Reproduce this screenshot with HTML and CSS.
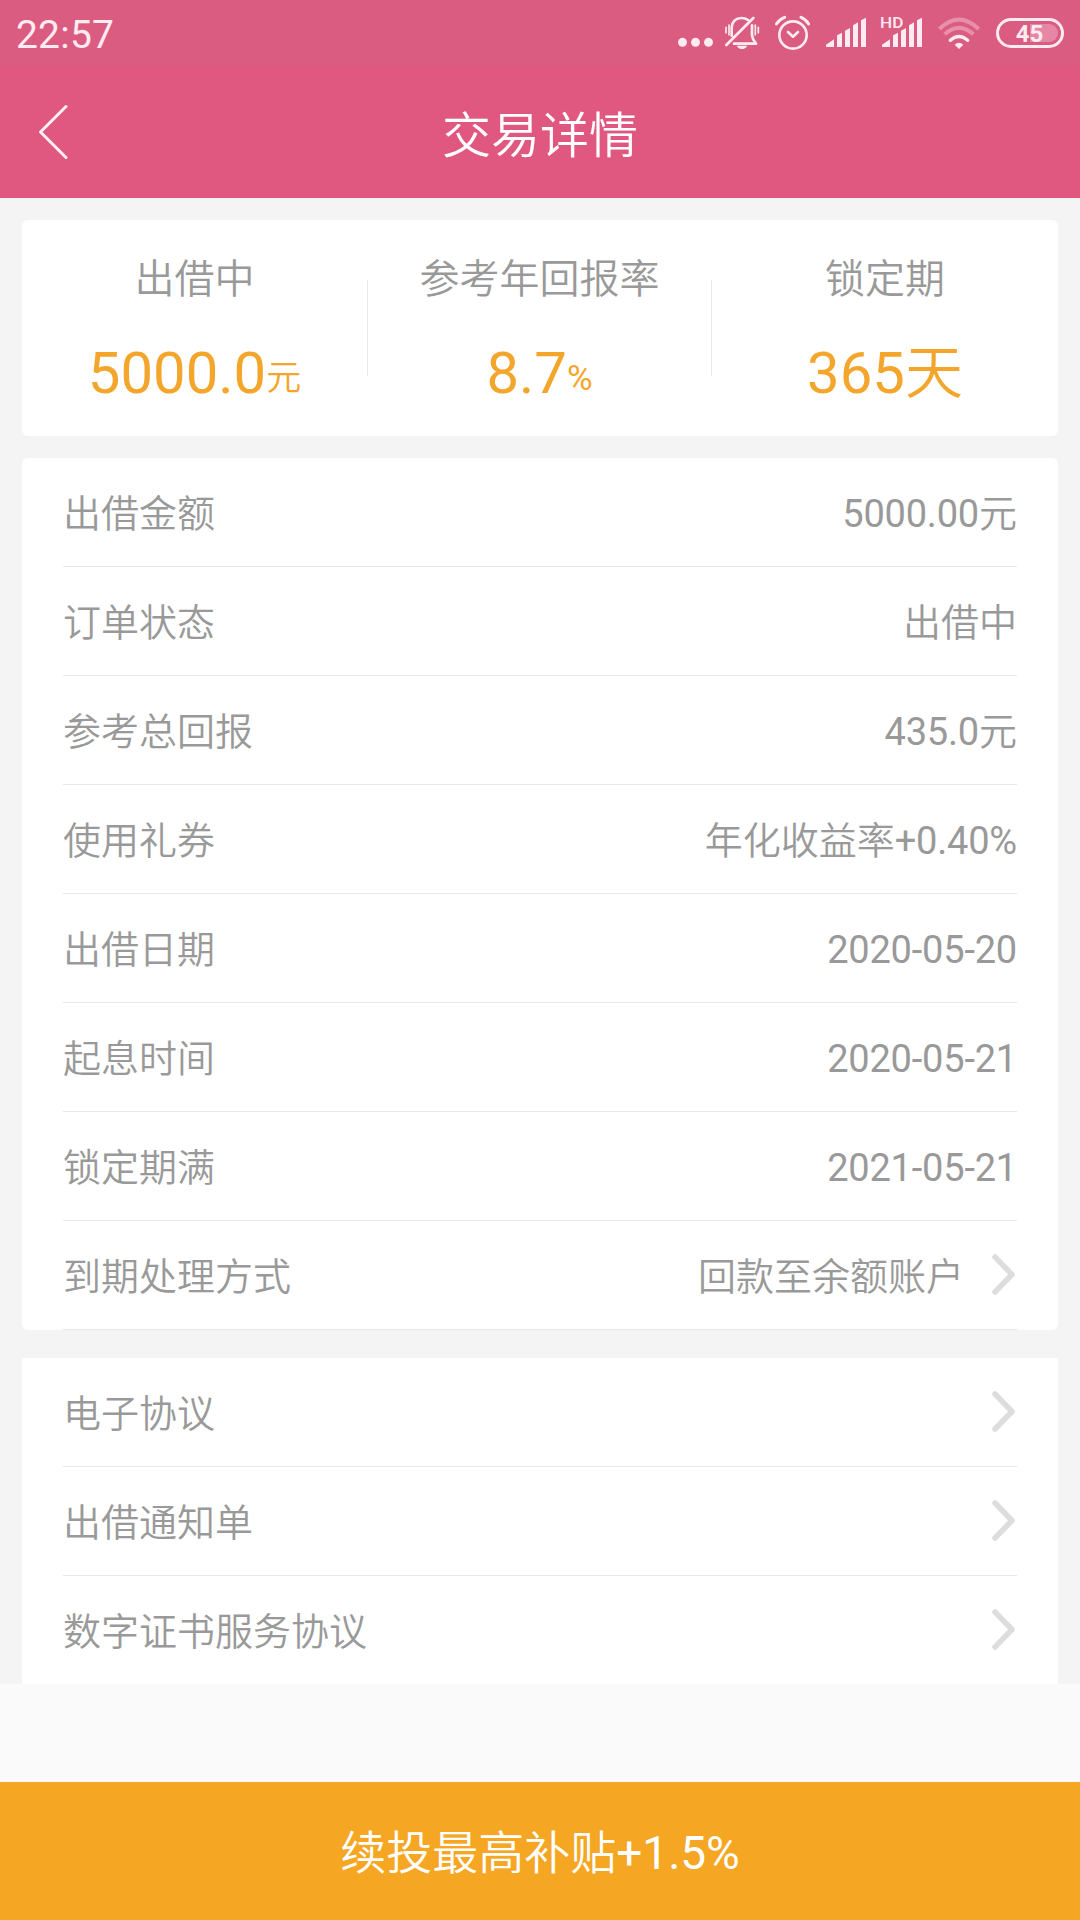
FILE: index.html
```html
<!DOCTYPE html>
<html lang="zh-CN">
<head>
    <meta charset="UTF-8">
    <meta name="viewport" content="width=device-width, initial-scale=1.0">
    <title>交易详情</title>
    <link rel="stylesheet" href="styles.css">
</head>
<body>
    <div class="status-bar">
        <span class="time">22:57</span>
        <div class="status-icons">
            <svg class="dots" width="35" height="35" viewBox="54 45 105 105">
                <circle cx="67.500" cy="127" r="13.500"/>
                <circle cx="106.500" cy="127" r="13.500"/>
                <circle cx="145.500" cy="127" r="13.500"/>
            </svg>
            <svg class="bell line" width="35" height="35" viewBox="195 45 105 105">
                <path d="M199 135L280 54M215 107V82Q218 54 245 54Q256 54 264 60M276 76V105Q277 117 288 131H222" stroke-width="8"/>
                <path d="M207 75V104M198 82V98M286 75V104M295 82V98" stroke-width="5"/>
                <path class="solid" d="M230 137H262Q256 147 246 147Q236 147 230 137Z"/>
            </svg>
            <svg class="alarm line" width="35" height="35" viewBox="345 45 105 105">
                <circle cx="399" cy="105" r="41" stroke-width="8"/>
                <path d="M384 96L399 110L414 96" stroke-width="8"/>
                <path d="M349 72Q358 58 374 52M446 72Q438 58 423 52" stroke-width="9"/>
            </svg>
            <svg class="signal" width="40" height="35" viewBox="498 45 120 105">
                <path d="M498 141V134L522 118V141ZM531 141V106L546 98V141ZM555 141V92L570 84V141ZM579 141V76L594 67V141ZM603 141V61L618 53V141Z"/>
            </svg>
            <svg class="signal-hd" width="43" height="35" viewBox="660 45 129 105">
                <path d="M666 141V134L690 118V141ZM699 141V106L714 98V141ZM723 141V92L738 84V141ZM747 141V76L762 67V141ZM771 141V61L786 53V141Z"/>
                <text x="660" y="84" textLength="70" lengthAdjust="spacingAndGlyphs">HD</text>
            </svg>
            <svg class="wifi line" width="42" height="35" viewBox="834 45 126 105">
                <path class="weak" d="M838 87Q897 31 956 87M854 103Q897 64 940 103"/>
                <path d="M871 121Q897 98 923 121" stroke-width="10"/>
                <path class="solid" d="M884 134Q897 122 910 134L897 147Z"/>
            </svg>
            <div class="battery"><span class="level">45</span></div>
        </div>
    </div>

    <div class="header">
        <svg class="back" width="30" height="56" viewBox="0 0 30 56">
            <path d="M28 2.500L2.500 28L28 53.500"/>
        </svg>
        <h1>交易详情</h1>
    </div>

    <div class="content">
        <div class="summary">
            <div class="item">
                <div class="label">出借中</div>
                <div class="number">5000.0<small class="cn">元</small></div>
            </div>
            <div class="item">
                <div class="label">参考年回报率</div>
                <div class="number">8.7<small>%</small></div>
            </div>
            <div class="item">
                <div class="label">锁定期</div>
                <div class="number">365<span class="cn">天</span></div>
            </div>
        </div>

        <div class="card details">
            <div class="row"><span>出借金额</span><span class="amount">5000.00<span class="cn">元</span></span></div>
            <div class="row"><span>订单状态</span><span>出借中</span></div>
            <div class="row"><span>参考总回报</span><span class="amount">435.0<span class="cn">元</span></span></div>
            <div class="row"><span>使用礼券</span><span class="amount"><span class="cn">年化收益率</span>+0.40%</span></div>
            <div class="row"><span>出借日期</span><span class="amount">2020-05-20</span></div>
            <div class="row"><span>起息时间</span><span class="amount">2020-05-21</span></div>
            <div class="row"><span>锁定期满</span><span class="amount">2021-05-21</span></div>
            <div class="row">
                <span>到期处理方式</span>
                <span class="value">回款至余额账户</span>
                <svg class="arrow" width="25" height="42" viewBox="0 0 25 42"><path d="M3 3L20 20.500L3 38"/></svg>
            </div>
        </div>

        <div class="card links">
            <div class="row">
                <span>电子协议</span>
                <svg class="arrow" width="25" height="42" viewBox="0 0 25 42"><path d="M3 3L20 20.500L3 38"/></svg>
            </div>
            <div class="row">
                <span>出借通知单</span>
                <svg class="arrow" width="25" height="42" viewBox="0 0 25 42"><path d="M3 3L20 20.500L3 38"/></svg>
            </div>
            <div class="row">
                <span>数字证书服务协议</span>
                <svg class="arrow" width="25" height="42" viewBox="0 0 25 42"><path d="M3 3L20 20.500L3 38"/></svg>
            </div>
        </div>
    </div>

    <button class="submit"><span class="cn">续投最高补贴</span>+1.5%</button>
</body>
</html>
```

FILE: styles.css
```css
* {
    box-sizing: border-box;
}
body {
    font-family: Roboto, "Noto Sans CJK SC", sans-serif;
    color: #999;
    margin: 0;
    min-height: 1920px;
    display: flex;
    flex-direction: column;
    background: #fafafa;
}
.status-bar {
    height: 66px;
    display: flex;
    justify-content: space-between;
    padding: 0 16px;
    background: #da5c80;
    color: #ffebf1;
}
.time {
    font-size: 39px;
    line-height: 71px;
    letter-spacing: 0.2px;
}
.status-icons {
    display: flex;
    align-items: flex-start;
    padding-top: 15px;
}
.status-icons svg {
    fill: #ffebf1;
}
.status-icons .line {
    fill: none;
    stroke: #ffebf1;
    stroke-linecap: round;
    stroke-linejoin: round;
}
.status-icons .solid {
    fill: #ffebf1;
    stroke: none;
}
.bell {
    margin-left: 12px;
}
.alarm, .signal-hd + .wifi {
    margin-left: 15px;
}
.signal {
    margin-left: 16px;
}
.signal-hd {
    margin-left: 14px;
}
.signal-hd text {
    font-size: 45px;
    font-weight: 500;
}
.wifi .weak {
    stroke: #e88fab;
    stroke-width: 12;
    stroke-linecap: butt;
}
.battery {
    width: 68px;
    height: 30px;
    margin: 3px 0 0 16px;
    padding: 3px;
    border: 3px solid #ffebf1;
    border-radius: 15px;
}
.level {
    display: block;
    height: 18px;
    padding-right: 1px;
    border-radius: 9px;
    background: linear-gradient(to right, #da5c80 50%, #e587a5 50%);
    font-size: 24px;
    font-weight: bold;
    line-height: 20px;
    text-align: center;
}
.header {
    height: 132px;
    display: grid;
    grid-template-columns: 120px 1fr 120px;
    align-items: center;
    background: #e05880;
    color: white;
}
.back {
    margin-left: 38px;
    fill: none;
    stroke: #fff0f5;
    stroke-width: 3;
    stroke-linecap: round;
    stroke-linejoin: round;
}
/* chinese text is drawn a bit lighter than the digits */
h1, .label, .row, .cn {
    font-weight: 350;
}
h1 {
    margin: 0;
    padding-top: 10px;
    font-size: 49px;
    line-height: 122px;
    text-align: center;
}
.content {
    padding: 22px 22px 0;
    background: #f4f4f4;
}
.summary {
    height: 216px;
    display: grid;
    grid-template-columns: 345px 344px 347px;
    align-items: center;
    margin-bottom: 22px;
    border-radius: 6px;
    background: white;
    text-align: center;
}
.item {
    height: 96px;
    display: flex;
    flex-direction: column;
    justify-content: center;
}
.item + .item {
    border-left: 1px solid #e8e8e8;
}
.label {
    padding-top: 6px;
    font-size: 40px;
    line-height: 60px;
}
.number {
    height: 80px;
    margin-top: 24px;
    font-size: 58px;
    line-height: 78px;
    color: #f3a62b;
}
.number small {
    font-size: 35px;
    line-height: 1;
    vertical-align: 3px;
}
.card {
    padding: 0 41px;
    background: white;
}
.details {
    margin-bottom: 28px;
    border-radius: 6px;
}
.row {
    height: 109px;
    display: flex;
    align-items: center;
    justify-content: space-between;
    border-bottom: 1px solid #e8e8e8;
    font-size: 38px;
    line-height: 108px;
}
.row > span {
    padding-top: 4px;
}
.links .row:last-child {
    height: 108px;
    border-bottom: none;
}
.amount {
    font-weight: 400;
    letter-spacing: -0.2px;
}
.amount .cn {
    letter-spacing: 0;
}
.value {
    margin-left: auto;
}
.arrow {
    margin-left: 28px;
    fill: none;
    stroke: #ddd;
    stroke-width: 5.500;
    stroke-linecap: round;
    stroke-linejoin: round;
}
.submit {
    height: 138px;
    margin-top: auto;
    padding: 4px 0 0;
    border: none;
    background: #f5a623;
    color: white;
    font-family: inherit;
    font-size: 46px;
    line-height: 134px;
}
```
